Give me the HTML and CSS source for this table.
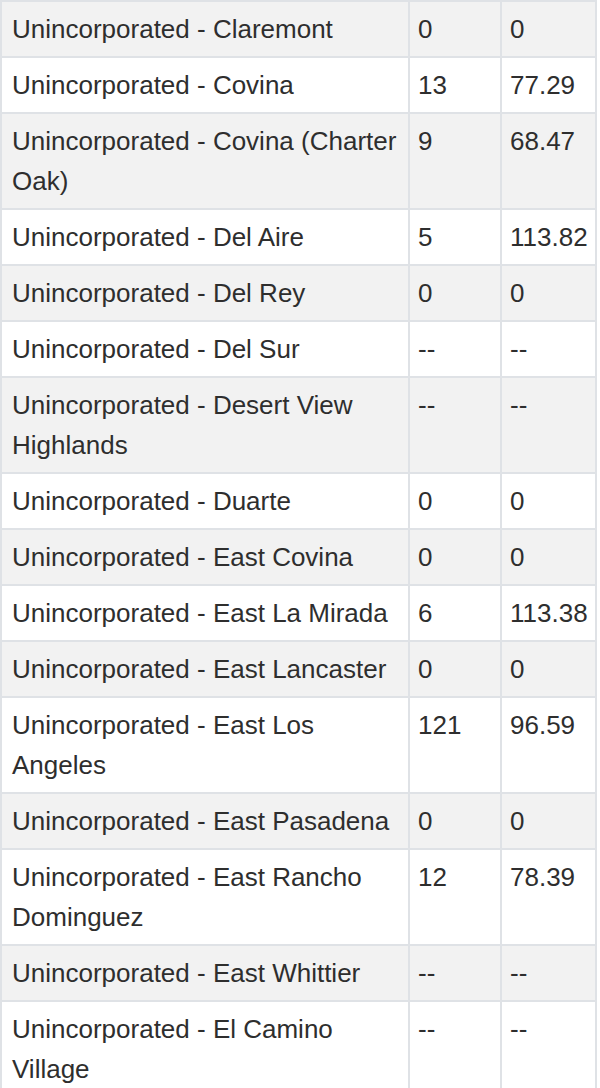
FILE: index.html
```html
<!DOCTYPE html>
<html lang="en">
<head>
<meta charset="utf-8">
<title>Unincorporated areas</title>
<link rel="stylesheet" href="styles.css">
</head>
<body>
<table class="data">
  <colgroup>
    <col class="c-name">
    <col class="c-count">
    <col class="c-rate">
  </colgroup>
  <tbody>
    <tr><td>Unincorporated - Claremont</td><td>0</td><td>0</td></tr>
    <tr><td>Unincorporated - Covina</td><td>13</td><td>77.29</td></tr>
    <tr><td>Unincorporated - Covina (Charter Oak)</td><td>9</td><td>68.47</td></tr>
    <tr><td>Unincorporated - Del Aire</td><td>5</td><td>113.82</td></tr>
    <tr><td>Unincorporated - Del Rey</td><td>0</td><td>0</td></tr>
    <tr><td>Unincorporated - Del Sur</td><td>--</td><td>--</td></tr>
    <tr><td>Unincorporated - Desert View Highlands</td><td>--</td><td>--</td></tr>
    <tr><td>Unincorporated - Duarte</td><td>0</td><td>0</td></tr>
    <tr><td>Unincorporated - East Covina</td><td>0</td><td>0</td></tr>
    <tr><td>Unincorporated - East La Mirada</td><td>6</td><td>113.38</td></tr>
    <tr><td>Unincorporated - East Lancaster</td><td>0</td><td>0</td></tr>
    <tr><td>Unincorporated - East Los Angeles</td><td>121</td><td>96.59</td></tr>
    <tr><td>Unincorporated - East Pasadena</td><td>0</td><td>0</td></tr>
    <tr><td>Unincorporated - East Rancho Dominguez</td><td>12</td><td>78.39</td></tr>
    <tr><td>Unincorporated - East Whittier</td><td>--</td><td>--</td></tr>
    <tr><td>Unincorporated - El Camino Village</td><td>--</td><td>--</td></tr>
  </tbody>
</table>
</body>
</html>
```

FILE: styles.css
```css
html, body {
  margin: 0;
  padding: 0;
  background: #ffffff;
}

.data {
  table-layout: fixed;
  border-collapse: separate;
  border-spacing: 0;
  width: 597px;
  border-top: 2px solid #dfe2e6;
  border-left: 2px solid #dfe2e6;
  font-family: "Liberation Sans", Arial, Helvetica, sans-serif;
  font-size: 26px;
  line-height: 40px;
  color: #2e2e2e;
}

.c-name { width: 408px; }
.c-count { width: 92px; }
.c-rate { width: 95px; }

.data td {
  padding: 7px 8px;
  vertical-align: top;
  border-right: 2px solid #dfe2e6;
  border-bottom: 2px solid #dfe2e6;
  background: #ffffff;
}

.data td:first-child {
  padding-left: 10px;
}

.data tr:nth-child(odd) td {
  background: #f2f2f2;
}
```
